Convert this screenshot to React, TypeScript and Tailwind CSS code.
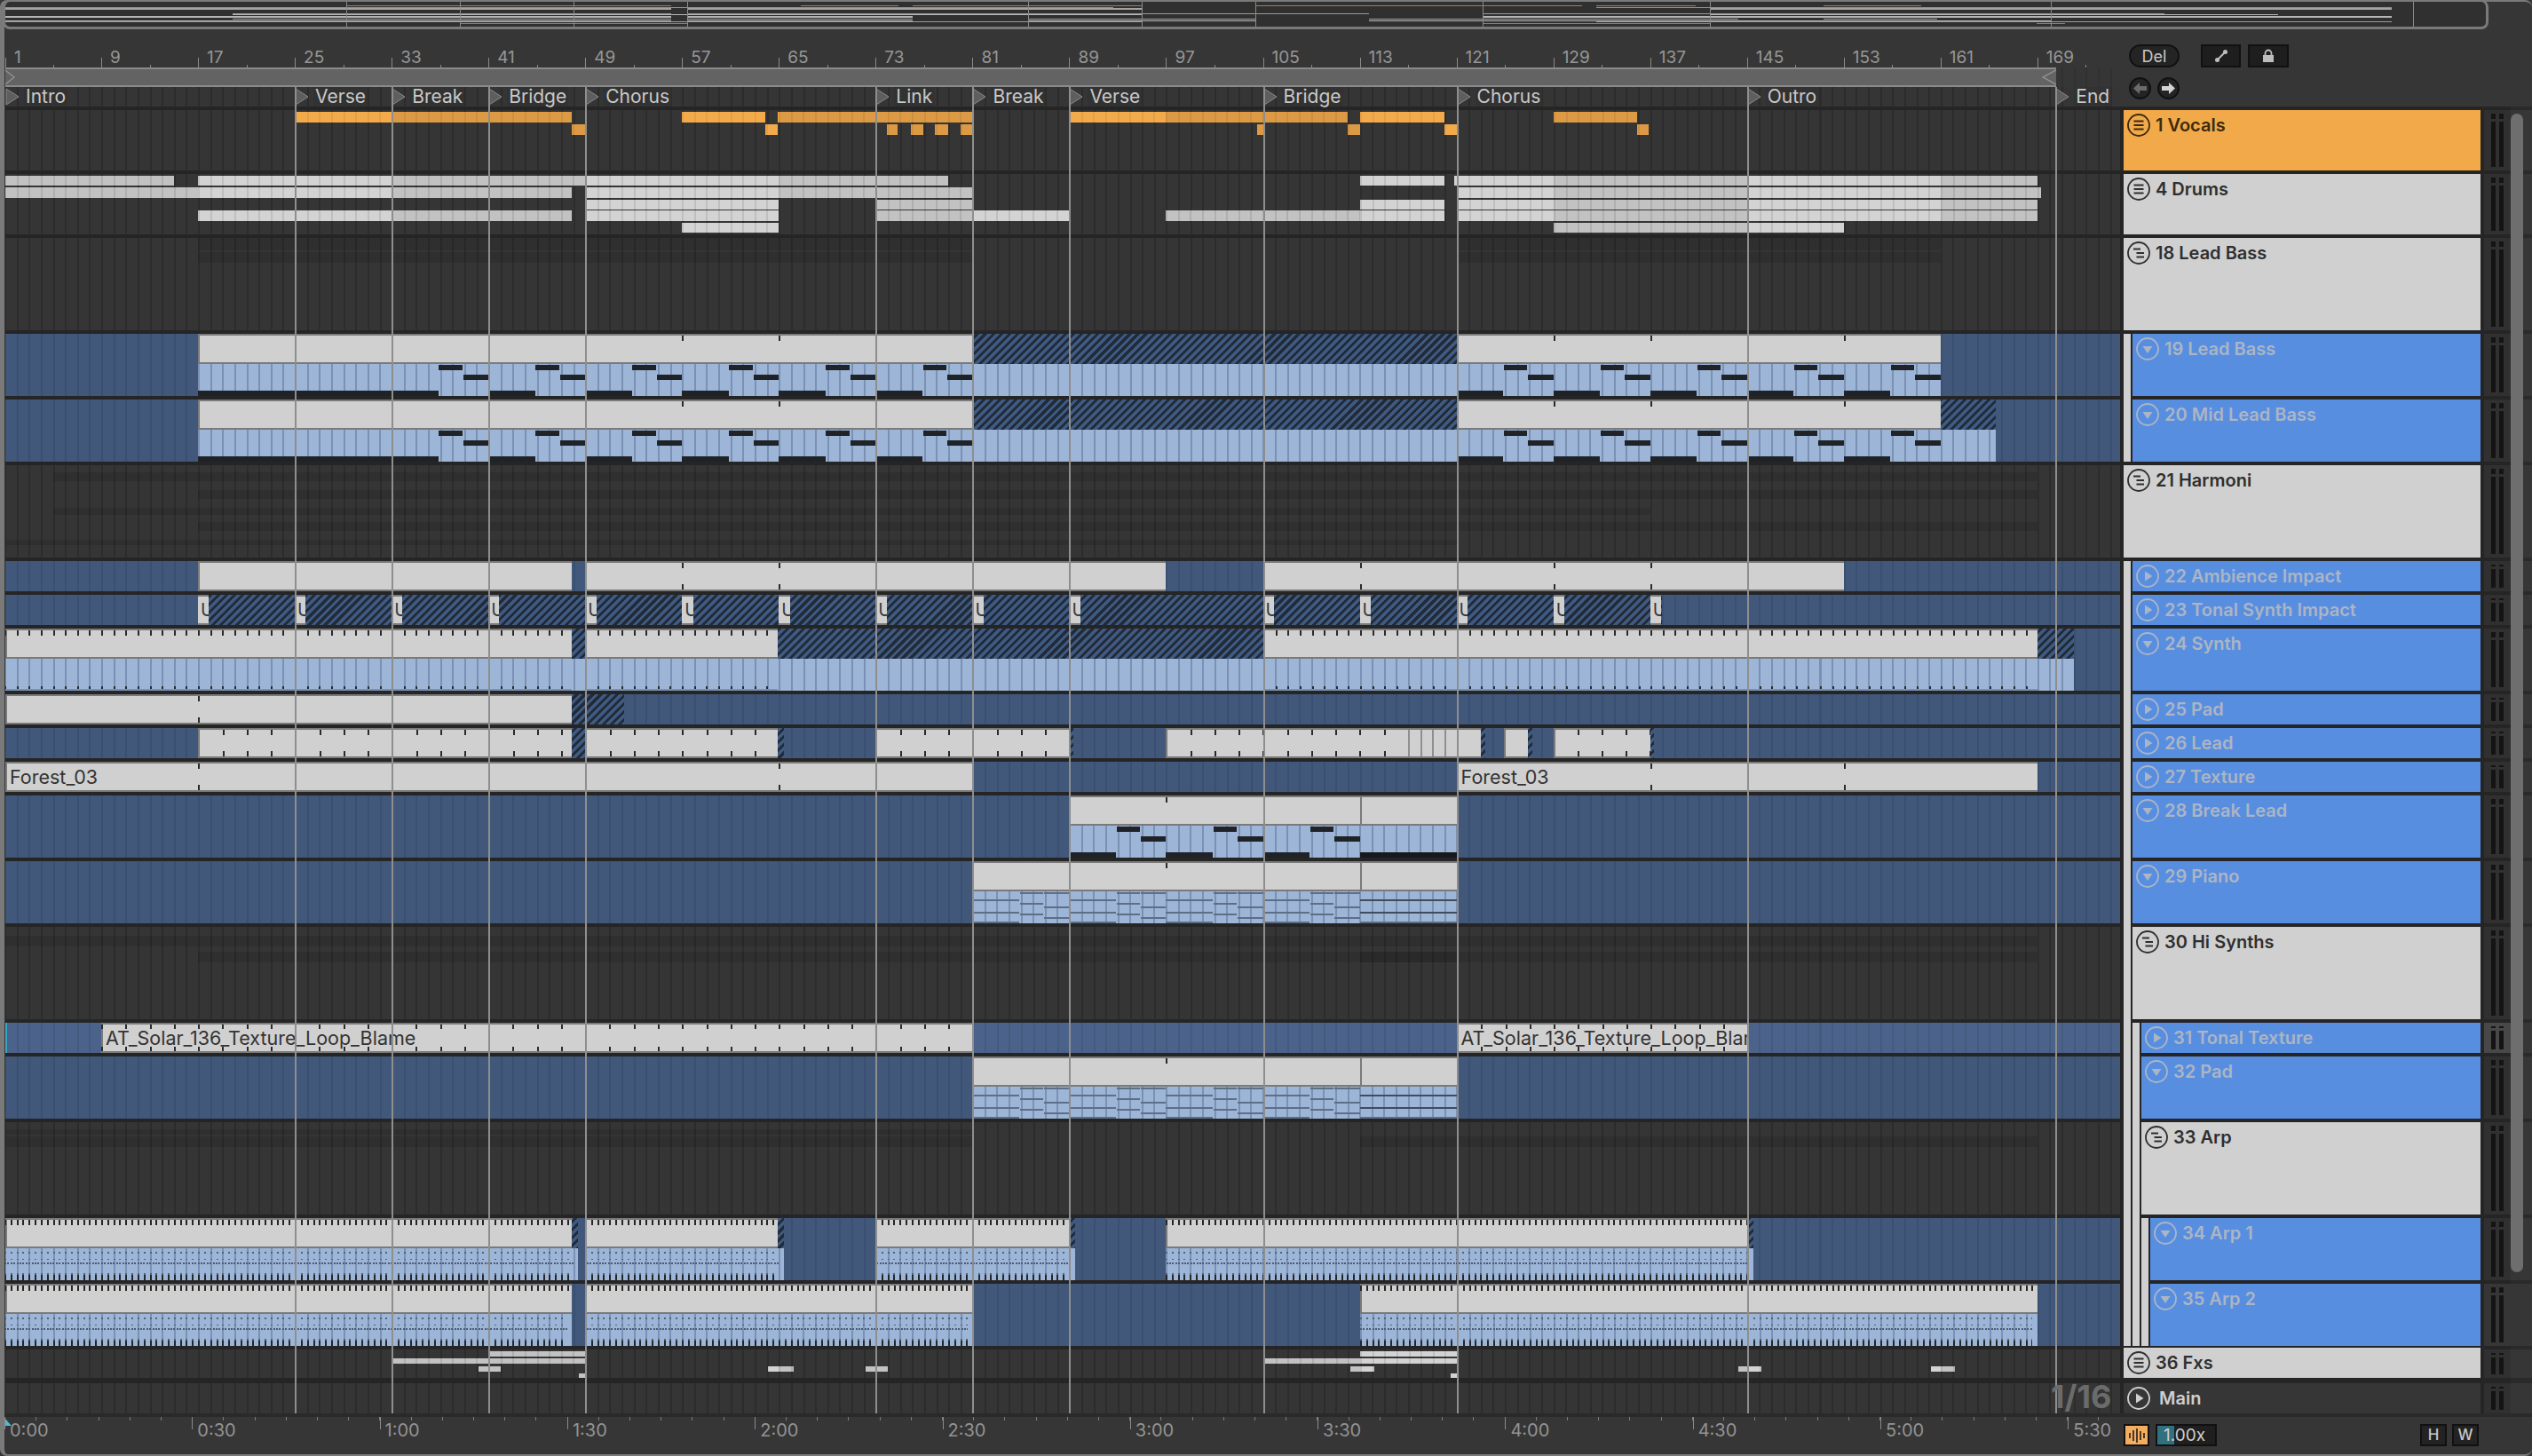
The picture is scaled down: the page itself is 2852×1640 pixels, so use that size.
import type { ReactNode } from "react"

// bar number -> x inside the arrangement lane (lane starts at page x=6)
const bx = (b: number) => Math.max(0, 5 + (b - 1) * 13.63 - 6)
const pageX = (b: number) => 5 + (b - 1) * 13.63
const mx = (b: number) => (b - 1) * 16

const gridBg = "bg-fixed bg-[position:5px_0] bg-[repeating-linear-gradient(90deg,#2c2c2c_0,#2c2c2c_2px,#353535_2px,#353535_13.63px)]"
const blueBg = "bg-fixed bg-[position:5px_0] bg-[repeating-linear-gradient(90deg,#3a5072_0,#3a5072_2px,#41587a_2px,#41587a_13.63px)]"
const blueLiteBg = "bg-fixed bg-[position:5px_0] bg-[repeating-linear-gradient(90deg,#445b80_0,#445b80_2px,#4b628a_2px,#4b628a_13.63px)]"
const bodyBg = "bg-fixed bg-[position:5px_0] bg-[repeating-linear-gradient(90deg,#7a91b3_0,#7a91b3_2px,#9db5d6_2px,#9db5d6_13.63px)]"
const hatchBg = "bg-fixed bg-[repeating-linear-gradient(135deg,#222b38_0,#222b38_3px,#3f5a82_3px,#3f5a82_6.4px)]"

const noteTones = {
  gray: [
    "bg-fixed bg-[position:5px_0] bg-[repeating-linear-gradient(90deg,#bfbfbf_0,#bfbfbf_2px,#d3d3d3_2px,#d3d3d3_13.63px)]",
    "bg-fixed bg-[position:5px_0] bg-[repeating-linear-gradient(90deg,#afafaf_0,#afafaf_2px,#c2c2c2_2px,#c2c2c2_13.63px)]",
  ],
  orange: [
    "bg-fixed bg-[position:5px_0] bg-[repeating-linear-gradient(90deg,#e59f45_0,#e59f45_2px,#f3aa4a_2px,#f3aa4a_13.63px)]",
    "bg-fixed bg-[position:5px_0] bg-[repeating-linear-gradient(90deg,#cf8f3f_0,#cf8f3f_2px,#dd9a44_2px,#dd9a44_13.63px)]",
  ],
}

function At({ from, to, top = 0, h, className, children }: { from: number; to: number; top?: number; h: number; className: string; children?: ReactNode }) {
  return (
    <div className={"absolute " + className} style={{ left: bx(from), width: bx(to) - bx(from), top, height: h }}>
      {children}
    </div>
  )
}

function Tick({ bar, top, h = 6 }: { bar: number; top: number; h?: number }) {
  return <div className="absolute w-[2px] bg-[#2a2a2a]" style={{ left: bx(bar), top, height: h }} />
}

// notes get darker on every other 16 bar stretch
function Notes({ spans, top, h, tone }: { spans: number[][]; top: number; h: number; tone: "gray" | "orange" }) {
  const pieces: { from: number; to: number; dark: boolean }[] = []
  spans.forEach(([from, to]) => {
    let a = from
    while (a < to) {
      const idx = Math.floor((a - 1) / 16)
      const b = Math.min(to, (idx + 1) * 16 + 1)
      pieces.push({ from: a, to: b, dark: idx % 2 === 0 })
      a = b
    }
  })
  return (
    <>
      {pieces.map((p, i) => (
        <At key={i} from={p.from} to={p.to} top={top} h={h} className={noteTones[tone][p.dark ? 1 : 0]} />
      ))}
    </>
  )
}

function Head({ from, to, h = 34, children }: { from: number; to: number; h?: number; children?: ReactNode }) {
  return (
    <At from={from} to={to} h={h} className="overflow-hidden border-y-2 border-l-2 border-[#7a7a7a] bg-[#d0d0d0]">
      {children}
    </At>
  )
}

function Body({ from, to }: { from: number; to: number }) {
  return <At from={from} to={to} top={34} h={36} className={bodyBg} />
}

function Hatch({ from, to, top = 0, h = 34 }: { from: number; to: number; top?: number; h?: number }) {
  return <At from={from} to={to} top={top} h={h} className={hatchBg} />
}

function ClipName({ text }: { text: string }) {
  return <span className="ml-[3px] block whitespace-nowrap text-[21.5px] leading-[30px] text-[#333333]">{text}</span>
}

// three lane riff, repeats every 8 bars
function Riff({ starts }: { starts: number[] }) {
  return (
    <>
      {starts.map((s) => (
        <div key={s}>
          <At from={s} to={s + 3.85} top={64} h={6} className="bg-[#1f2328]" />
          <At from={s + 3.9} to={s + 5.85} top={35} h={6} className="bg-[#1f2328]" />
          <At from={s + 5.9} to={s + 8} top={46} h={6} className="bg-[#1f2328]" />
        </div>
      ))}
    </>
  )
}

// thin pad lines of the chord clips
function PadLines({ from, starts, to }: { from: number; starts: number[]; to: number }) {
  return (
    <>
      {starts.map((s) => (
        <div key={s}>
          <At from={s} to={s + 3.85} top={43} h={2} className="bg-[#5d6e87]" />
          <At from={s} to={s + 3.85} top={57} h={2} className="bg-[#5d6e87]" />
          <At from={s} to={s + 3.85} top={68} h={2} className="bg-[#5d6e87]" />
          <At from={s + 3.9} to={s + 5.85} top={35} h={2} className="bg-[#5d6e87]" />
          <At from={s + 3.9} to={s + 5.85} top={47} h={2} className="bg-[#5d6e87]" />
          <At from={s + 3.9} to={s + 5.85} top={59} h={2} className="bg-[#5d6e87]" />
          <At from={s + 5.9} to={s + 8} top={35} h={2} className="bg-[#5d6e87]" />
          <At from={s + 5.9} to={s + 8} top={51} h={2} className="bg-[#5d6e87]" />
          <At from={s + 5.9} to={s + 8} top={63} h={2} className="bg-[#5d6e87]" />
        </div>
      ))}
      <At from={from} to={to} top={43} h={2} className="bg-[#3f4c5e]" />
      <At from={from} to={to} top={57} h={2} className="bg-[#3f4c5e]" />
      <At from={from} to={to} top={68} h={2} className="bg-[#5d6e87]" />
    </>
  )
}

function ArpClip({ heads, bodies, thin }: { heads: number[][]; bodies: number[][]; thin?: number[][] }) {
  const barTicks = "bg-fixed bg-[position:5px_0] bg-[repeating-linear-gradient(90deg,#262626_0,#262626_2px,transparent_2px,transparent_6.815px)]"
  const dots = "bg-fixed bg-[position:5px_0] bg-[repeating-linear-gradient(90deg,#4f617c_0,#4f617c_2px,transparent_2px,transparent_6.815px)]"
  const fineDots = "bg-fixed bg-[position:5px_0] bg-[repeating-linear-gradient(90deg,#4a5b75_0,#4a5b75_2px,transparent_2px,transparent_3.4px)]"
  return (
    <>
      {heads.map(([a, b]) => (
        <div key={a}>
          <Head from={a} to={b} />
          <At from={a} to={b} top={2} h={6} className={barTicks} />
        </div>
      ))}
      {(thin || []).map(([a, b]) => <Hatch key={a} from={a} to={b} />)}
      {bodies.map(([a, b]) => (
        <div key={a}>
          <Body from={a} to={b} />
          <At from={a} to={b - 0.4} top={38} h={2} className={dots} />
          <At from={a} to={b - 0.4} top={46} h={1} className={dots} />
          <At from={a} to={b - 0.4} top={50} h={2} className={fineDots} />
          <At from={a} to={b - 0.4} top={62} h={2} className={dots} />
          <At from={a} to={b - 0.4} top={64} h={6} className={barTicks} />
        </div>
      ))}
    </>
  )
}

function Band({ from, to, top, h }: { from: number; to: number; top: number; h: number }) {
  return <At from={from} to={to} top={top} h={h} className="bg-black/10" />
}

const melodyA = [33, 41, 49, 57, 65, 73, 121, 129, 137, 145, 153]
const everyBar = "bg-fixed bg-[position:5px_0] bg-[repeating-linear-gradient(90deg,#2a2a2a_0,#2a2a2a_2px,transparent_2px,transparent_13.63px)]"
const everyTwoBars = "bg-fixed bg-[position:5px_0] bg-[repeating-linear-gradient(90deg,#2a2a2a_0,#2a2a2a_2px,transparent_2px,transparent_27.26px)]"

const vocalsUp = [[25, 47.9], [57, 63.9], [64.9, 81], [89, 112], [113, 120], [129, 135.9]]
const vocalsLow = [[47.9, 49], [63.9, 64.9], [73.9, 74.8], [75.9, 76.9], [77.9, 79], [80, 81], [104.5, 105], [112, 113], [120, 121], [135.9, 136.9]]
const drums = [
  { top: 2, h: 11, spans: [[1, 15], [17, 79], [113, 120], [120.8, 169]] },
  { top: 15, h: 12, spans: [[1, 47.9], [49, 81], [121, 169.3]] },
  { top: 29, h: 11, spans: [[49, 65], [73, 81], [113, 120], [121, 169]] },
  { top: 41, h: 12, spans: [[17, 47.9], [49, 65], [73, 89], [97, 120], [121, 169]] },
  { top: 55, h: 11, spans: [[57, 65], [129, 153]] },
]
const fxLanes = [
  { top: 2, h: 6, spans: [[41, 49], [113, 121]] },
  { top: 10, h: 6, spans: [[33, 49], [105, 121]] },
  { top: 19, h: 6, spans: [[40.2, 42], [64.1, 66.2], [72.2, 74], [112.2, 114.2], [144.3, 146.2], [160.2, 162.2]] },
  { top: 27, h: 5, spans: [[48.5, 49], [120.5, 121]] },
]
const impactStarts = [17, 25, 33, 41, 49, 57, 65, 73, 81, 89, 105, 113, 121, 129, 137]

type Track = {
  name: string
  h: number
  depth: number
  shared: number
  tone: "orange" | "light" | "blue" | "main"
  icon: "closed" | "open" | "down" | "right"
  lane: "grid" | "blue" | "lite"
  sep?: number
  cell?: string
  content?: ReactNode
}

const tracks: Track[] = [
  {
    name: "1 Vocals", h: 68, depth: 0, shared: 0, tone: "orange", icon: "closed", lane: "grid",
    content: (
      <>
        <Notes spans={vocalsUp} top={2} h={12} tone="orange" />
        <Notes spans={vocalsLow} top={16} h={12} tone="orange" />
      </>
    ),
  },
  {
    name: "4 Drums", h: 68, depth: 0, shared: 0, tone: "light", icon: "closed", lane: "grid",
    content: <>{drums.map((d) => <Notes key={d.top} spans={d.spans} top={d.top} h={d.h} tone="gray" />)}</>,
  },
  {
    name: "18 Lead Bass", h: 104, depth: 0, shared: 0, tone: "light", icon: "open", lane: "grid",
    content: (
      <>
        <Band from={17} to={81} top={0} h={14} />
        <Band from={17} to={81} top={16} h={12} />
        <Band from={121} to={161} top={0} h={14} />
        <Band from={121} to={161} top={16} h={12} />
      </>
    ),
  },
  {
    name: "19 Lead Bass", h: 70, depth: 1, shared: 0, tone: "blue", icon: "down", lane: "blue",
    content: (
      <>
        <Head from={17} to={81} />
        <Hatch from={81} to={121} />
        <Head from={121} to={161} />
        {[57, 65, 129, 137, 153].map((b) => <Tick key={b} bar={b} top={2} />)}
        <Body from={17} to={161} />
        <At from={17} to={33} top={64} h={6} className="bg-[#1f2328]" />
        <Riff starts={melodyA} />
      </>
    ),
  },
  {
    name: "20 Mid Lead Bass", h: 70, depth: 1, shared: 1, tone: "blue", icon: "down", lane: "blue",
    content: (
      <>
        <Head from={17} to={81} />
        <Hatch from={81} to={121} />
        <Head from={121} to={161} />
        <Hatch from={161} to={165.6} />
        {[57, 65, 129, 137, 153].map((b) => <Tick key={b} bar={b} top={2} />)}
        <Body from={17} to={165.6} />
        <At from={17} to={33} top={64} h={6} className="bg-[#1f2328]" />
        <Riff starts={melodyA} />
      </>
    ),
  },
  {
    name: "21 Harmoni", h: 104, depth: 0, shared: 0, tone: "light", icon: "open", lane: "grid",
    content: (
      <>
        <Band from={5} to={169} top={8} h={10} />
        <Band from={17} to={169} top={28} h={10} />
        <Band from={5} to={137} top={48} h={8} />
        <Band from={17} to={169} top={64} h={10} />
        <Band from={1} to={121} top={84} h={6} />
      </>
    ),
  },
  {
    name: "22 Ambience Impact", h: 34, depth: 1, shared: 0, tone: "blue", icon: "right", lane: "blue",
    content: (
      <>
        {[[17, 47.9], [49, 97], [105, 153]].map(([a, b]) => <Head key={a} from={a} to={b} />)}
        {[57, 65, 113, 129, 137].map((b) => (
          <div key={b}>
            <Tick bar={b} top={2} />
            <Tick bar={b} top={26} />
          </div>
        ))}
      </>
    ),
  },
  {
    name: "23 Tonal Synth Impact", h: 34, depth: 1, shared: 1, tone: "blue", icon: "right", lane: "blue",
    content: (
      <>
        <Hatch from={17} to={138} />
        {impactStarts.map((b) => (
          <At key={b} from={b} to={b + 0.9} h={34} className="overflow-hidden border-y-2 border-[#7a7a7a] bg-[#d0d0d0]">
            <span className="ml-[3px] block text-[20px] leading-[30px] text-[#3a3a3a]">U</span>
          </At>
        ))}
      </>
    ),
  },
  {
    name: "24 Synth", h: 70, depth: 1, shared: 1, tone: "blue", icon: "down", lane: "blue",
    content: (
      <>
        {[[1, 47.9], [49, 64.9], [105, 169]].map(([a, b]) => (
          <div key={a}>
            <Head from={a} to={b} />
            <At from={a} to={b} top={2} h={6} className={everyBar} />
          </div>
        ))}
        <Hatch from={47.9} to={49} />
        <Hatch from={64.9} to={105} />
        <Hatch from={169} to={172} />
        <Body from={1} to={172} />
        {[[1, 47.9], [49, 64.9], [105, 169]].map(([a, b]) => (
          <div key={a}>
            <At from={a} to={b} top={65} h={4} className={everyBar} />
            <At from={a} to={b} top={68} h={2} className="bg-[#7a91b3]" />
          </div>
        ))}
      </>
    ),
  },
  {
    name: "25 Pad", h: 34, depth: 1, shared: 1, tone: "blue", icon: "right", lane: "blue",
    content: (
      <>
        <Head from={1} to={47.9} />
        <Hatch from={47.9} to={52.2} />
        <Tick bar={17} top={2} />
        <Tick bar={17} top={26} />
      </>
    ),
  },
  {
    name: "26 Lead", h: 34, depth: 1, shared: 1, tone: "blue", icon: "right", lane: "blue",
    content: (
      <>
        {[[17, 47.9], [49, 64.9], [73, 89], [97, 123], [124.9, 126.9], [129, 137]].map(([a, b]) => <Head key={a} from={a} to={b} />)}
        {[[47.9, 49], [64.9, 65.4], [89, 89.3], [123, 123.4], [126.9, 127.3], [137, 137.3]].map(([a, b]) => <Hatch key={a} from={a} to={b} />)}
        {[[17, 47.9], [49, 64.9], [73, 89], [97, 116], [129, 137]].map(([a, b]) => (
          <div key={a}>
            <At from={a + 1} to={b} top={2} h={6} className={everyTwoBars} />
            <At from={a + 1} to={b} top={26} h={6} className={everyTwoBars} />
          </div>
        ))}
        {[117, 118, 119, 120].map((b) => <At key={b} from={b} to={b + 0.15} top={2} h={30} className="bg-[#8f8f8f]" />)}
      </>
    ),
  },
  {
    name: "27 Texture", h: 34, depth: 1, shared: 1, tone: "blue", icon: "right", lane: "blue",
    content: (
      <>
        <Head from={1} to={81}><ClipName text="Forest_03" /></Head>
        <Head from={121} to={169}><ClipName text="Forest_03" /></Head>
        {[17, 65, 137, 153].map((b) => (
          <div key={b}>
            <Tick bar={b} top={2} />
            <Tick bar={b} top={26} />
          </div>
        ))}
      </>
    ),
  },
  {
    name: "28 Break Lead", h: 70, depth: 1, shared: 1, tone: "blue", icon: "down", lane: "blue",
    content: (
      <>
        <Head from={89} to={121} />
        <Tick bar={97} top={2} />
        <At from={113} to={113.15} top={2} h={30} className="bg-[#7a7a7a]" />
        <Body from={89} to={121} />
        <Riff starts={[89, 97, 105]} />
        <At from={113} to={121} top={64} h={6} className="bg-[#17191c]" />
      </>
    ),
  },
  {
    name: "29 Piano", h: 70, depth: 1, shared: 1, tone: "blue", icon: "down", lane: "blue",
    content: (
      <>
        <Head from={81} to={121} />
        <Tick bar={97} top={2} />
        <At from={113} to={113.15} top={2} h={30} className="bg-[#7a7a7a]" />
        <Body from={81} to={121} />
        <PadLines starts={[81, 89, 97, 105]} from={113} to={121} />
      </>
    ),
  },
  {
    name: "30 Hi Synths", h: 104, depth: 1, shared: 1, tone: "light", icon: "open", lane: "grid",
    content: (
      <>
        <Band from={1} to={169} top={10} h={12} />
        <Band from={17} to={121} top={28} h={12} />
        <Band from={113} to={169} top={28} h={12} />
      </>
    ),
  },
  {
    name: "31 Tonal Texture", h: 34, depth: 2, shared: 1, tone: "blue", icon: "right", lane: "lite",
    content: (
      <>
        <div className="absolute left-0 top-0 h-[34px] w-[2px] bg-[#35a9c4]" />
        <Head from={9} to={81}><ClipName text="AT_Solar_136_Texture_Loop_Blame" /></Head>
        <Head from={121} to={145}><ClipName text="AT_Solar_136_Texture_Loop_Blame" /></Head>
        {[[9, 81], [121, 145]].map(([a, b]) => (
          <div key={a}>
            <At from={a} to={b} top={2} h={5} className={everyTwoBars} />
            <At from={a} to={b} top={27} h={5} className={everyTwoBars} />
          </div>
        ))}
      </>
    ),
  },
  {
    name: "32 Pad", h: 70, depth: 2, shared: 2, tone: "blue", icon: "down", lane: "blue",
    content: (
      <>
        <Head from={81} to={121} />
        <Tick bar={97} top={2} />
        <At from={113} to={113.15} top={2} h={30} className="bg-[#7a7a7a]" />
        <Body from={81} to={121} />
        <PadLines starts={[81, 89, 97, 105]} from={113} to={121} />
      </>
    ),
  },
  {
    name: "33 Arp", h: 104, depth: 2, shared: 2, tone: "light", icon: "open", lane: "grid",
    content: (
      <>
        <Band from={1} to={81} top={8} h={6} />
        <Band from={1} to={81} top={16} h={12} />
        <Band from={113} to={169} top={16} h={12} />
      </>
    ),
  },
  {
    name: "34 Arp 1", h: 70, depth: 3, shared: 2, tone: "blue", icon: "down", lane: "blue",
    content: (
      <ArpClip
        heads={[[1, 47.9], [49, 64.9], [73, 89], [97, 145]]}
        thin={[[47.9, 48.4], [64.9, 65.4], [89, 89.5], [145, 145.5]]}
        bodies={[[1, 48.4], [49, 65.4], [73, 89.5], [97, 145.5]]}
      />
    ),
  },
  {
    name: "35 Arp 2", h: 70, depth: 3, shared: 3, tone: "blue", icon: "down", lane: "blue", cell: "bg-[#363636]",
    content: (
      <ArpClip heads={[[1, 47.9], [49, 81], [113, 169]]} bodies={[[1, 47.9], [49, 81], [113, 169]]} />
    ),
  },
  {
    name: "36 Fxs", h: 32, depth: 0, shared: 0, tone: "light", icon: "closed", lane: "grid",
    content: <>{fxLanes.map((l) => <Notes key={l.top} spans={l.spans} top={l.top} h={l.h} tone="gray" />)}</>,
  },
  { name: "Main", h: 34, depth: 0, shared: 0, tone: "main", icon: "right", lane: "grid", sep: 6 },
]

const laneClass = { grid: gridBg, blue: blueBg, lite: blueLiteBg }
const toneClass = {
  orange: "bg-[#f2a949] text-[#3d2a0e]",
  light: "bg-[#d0d0d0] text-[#2f2f2f]",
  blue: "bg-[#588ee0] text-[#acb5c4]",
  main: "bg-[#363636] text-[#cfcfcf]",
}

function TrackIcon({ icon }: { icon: Track["icon"] }) {
  return (
    <svg width="26" height="26" viewBox="0 0 26 26" className="shrink-0" fill="none" stroke="currentColor">
      <circle cx="13" cy="13" r="12" strokeWidth="1.8" />
      {icon === "closed" && <path d="M7.5 8.5H18.5M7.5 13H18.5M7.5 17.5H18.5" strokeWidth="2" />}
      {icon === "open" && <path d="M7 8.5H15M10.5 13H19M10.5 17.5H19" strokeWidth="2" />}
      {icon === "down" && <path d="M7.5 10H18.5L13 18Z" fill="currentColor" stroke="none" />}
      {icon === "right" && <path d="M10 7.5V18.5L18.5 13Z" fill="currentColor" stroke="none" />}
    </svg>
  )
}

function Indent({ count }: { count: number }) {
  return (
    <>
      {Array.from({ length: count }).map((_, i) => (
        <div key={i} className="flex shrink-0">
          <div className="w-[8px] bg-[#d0d0d0]" />
          <div className="w-[2px] bg-[#252525]" />
        </div>
      ))}
    </>
  )
}

function TrackRow({ t }: { t: Track }) {
  const sep = t.sep ?? 4
  const short = t.h <= 34
  return (
    <div className="flex" style={{ height: t.h + sep }}>
      {/* lane */}
      <div className="ml-[6px] flex w-[2382px] flex-col">
        <div className="bg-[#252525]" style={{ height: sep }} />
        <div className={"relative flex-1 overflow-hidden " + laneClass[t.lane]}>{t.content}</div>
      </div>
      <div className="w-[4px] bg-[#252525]" />
      {/* header */}
      <div className="flex w-[402px]">
        <Indent count={t.shared} />
        <div className="flex flex-1 flex-col">
          <div className="bg-[#252525]" style={{ height: sep }} />
          <div className="flex flex-1">
            <Indent count={t.depth - t.shared} />
            <div className={"flex flex-1 items-start " + toneClass[t.tone]}>
              <div className="flex h-[34px] items-center gap-[6px] pl-[4px]">
                <TrackIcon icon={t.icon} />
                <span className={"whitespace-nowrap text-[20px] font-semibold " + (t.tone === "main" ? "pl-[4px]" : "")}>{t.name}</span>
              </div>
            </div>
          </div>
        </div>
      </div>
      <div className="w-[4px] bg-[#252525]" />
      {/* mixer cell */}
      <div className="flex w-[30px] flex-col">
        <div className="bg-[#252525]" style={{ height: sep }} />
        <div className={"flex flex-1 gap-[4px] py-[4px] pl-[8px] " + (t.name === "31 Tonal Texture" ? "bg-[#484848]" : t.cell ?? "bg-[#303030]")}>
          {[0, 1].map((i) => (
            <div key={i} className="flex w-[5px] flex-col gap-[3px]">
              <div className={"bg-[#141414] " + (short ? "h-[2px]" : "h-[6px]")} />
              <div className="flex-1 bg-[#141414]" />
            </div>
          ))}
        </div>
      </div>
      <div className="flex w-[24px] flex-col">
        <div className="bg-[#2a2a2a]" style={{ height: sep }} />
      </div>
    </div>
  )
}

const miniRows: { y: number; h: number; cls: string; spans: number[][] }[] = [
  { y: 6, h: 1, cls: "bg-[#b07a3a]", spans: vocalsUp },
  { y: 8, h: 1, cls: "bg-[#8f8f8f]", spans: [[1, 79], [113, 169]] },
  { y: 9, h: 2, cls: "bg-[#a3a3a3]", spans: [[1, 47.9], [49, 81], [121, 169]] },
  { y: 15, h: 1, cls: "bg-[#9a9a9a]", spans: [[17, 47.9], [49, 97], [105, 153]] },
  { y: 16, h: 1, cls: "bg-[#b5b5b5]", spans: [[17, 81], [121, 161]] },
  { y: 18, h: 2, cls: "bg-[#b5b5b5]", spans: [[1, 47.9], [49, 64.9], [105, 169]] },
  { y: 21, h: 1, cls: "bg-[#a5a5a5]", spans: [[17, 47.9], [49, 64.9], [73, 89], [97, 123], [129, 137]] },
  { y: 23, h: 1, cls: "bg-[#b5b5b5]", spans: [[1, 47.9], [49, 64.9], [73, 89], [97, 145]] },
  { y: 24, h: 1, cls: "bg-[#9a9a9a]", spans: [[1, 81], [113, 169]] },
  { y: 26, h: 1, cls: "bg-[#7f7f7f]", spans: [[33, 49], [105, 121], [144, 146]] },
]

const locators = [
  { name: "Intro", bar: 1 },
  { name: "Verse", bar: 25 },
  { name: "Break", bar: 33 },
  { name: "Bridge", bar: 41 },
  { name: "Chorus", bar: 49 },
  { name: "Link", bar: 73 },
  { name: "Break", bar: 81 },
  { name: "Verse", bar: 89 },
  { name: "Bridge", bar: 105 },
  { name: "Chorus", bar: 121 },
  { name: "Outro", bar: 145 },
  { name: "End", bar: 170.5 },
]
const rulerBars = Array.from({ length: 22 }).map((_, i) => 1 + i * 8)
const times = ["0:00", "0:30", "1:00", "1:30", "2:00", "2:30", "3:00", "3:30", "4:00", "4:30", "5:00", "5:30"]

function Overview() {
  const marks = locators.slice(1)
  return (
    <div className="relative ml-[3px] h-[33px] w-[2800px] overflow-hidden rounded-[8px] border-x-[3px] border-b-[3px] border-t-2 border-[#7a7a7a] bg-[#303030]">
      {miniRows.map((r, i) => (
        <div key={i}>
          {r.spans.map(([a, b]) => (
            <div key={a} className={"absolute " + r.cls} style={{ left: mx(a), width: mx(b) - mx(a), top: r.y - 2, height: r.h }} />
          ))}
        </div>
      ))}
      {marks.map((l) => (
        <div key={l.bar} className="absolute top-0 h-full w-[1px] bg-[#8a8a8a]" style={{ left: mx(l.bar) }} />
      ))}
    </div>
  )
}

function TopBar() {
  return (
    <div className="flex h-[87px]">
      {/* ruler, loop brace, locators */}
      <div className="ml-[6px] flex w-[2382px] flex-col">
        <div className="relative h-[43px]">
          {rulerBars.map((b) => (
            <div key={b}>
              <div className="absolute bottom-0 h-[11px] w-[1px] bg-[#8a8a8a]" style={{ left: bx(b) }} />
              <div className="absolute bottom-0 h-[3px] w-[1px] bg-[#8a8a8a]" style={{ left: bx(b + 4) }} />
              <span className="absolute top-[20px] text-[19px] leading-[24px] text-[#969696]" style={{ left: bx(b) + 10 }}>{b}</span>
            </div>
          ))}
        </div>
        <div className="flex h-[22px]">
          <div className="flex w-[2310px] flex-col">
            <div className="h-[2px] bg-[#8a8a8a]" />
            <div className="relative flex-1 bg-[#636363]">
              <svg width="12" height="18" viewBox="0 0 12 18" className="absolute left-0 top-0" fill="none">
                <path d="M0 1L10 9L0 17" stroke="#8f8f8f" strokeWidth="1.5" />
              </svg>
              <svg width="16" height="18" viewBox="0 0 16 18" className="absolute right-0 top-0" fill="none">
                <path d="M16 1L1 9L16 17" stroke="#8f8f8f" strokeWidth="1.5" />
              </svg>
            </div>
            <div className="h-[2px] bg-[#8a8a8a]" />
          </div>
          <div className={"flex-1 opacity-50 " + gridBg} />
        </div>
        <div className={"relative h-[22px] " + gridBg}>
          {locators.map((l) => (
            <div key={l.name + l.bar} className="absolute top-0 flex h-[22px] items-center" style={{ left: bx(l.bar) }}>
              <svg width="16" height="22" viewBox="0 0 16 22" className="shrink-0">
                <path d="M1 2L15 11L1 20Z" fill="#5e5e5e" stroke="#8a8a8a" strokeWidth="1" />
              </svg>
              <span className="ml-[5px] bg-[#323232] px-[2px] text-[21px] leading-[22px] text-[#c9c9c9]">{l.name}</span>
            </div>
          ))}
        </div>
      </div>
      {/* edit buttons */}
      <div className="flex flex-col pl-[10px] pt-[17px]">
        <div className="flex h-[26px]">
          <div className="flex w-[57px] items-center justify-center rounded-full border-2 border-[#111111] bg-[#242424] text-[18px] text-[#c8c8c8]">Del</div>
          <div className="ml-[24px] flex w-[45px] items-center justify-center border-2 border-[#111111] bg-[#1e1e1e]">
            <svg width="16" height="16" viewBox="0 0 16 16" fill="none">
              <path d="M3.5 12.5L12 4" stroke="#bdbdbd" strokeWidth="2" />
              <circle cx="3.5" cy="12.5" r="2.5" fill="#bdbdbd" />
              <circle cx="12.5" cy="3.5" r="2.5" fill="#bdbdbd" />
            </svg>
          </div>
          <div className="ml-[8px] flex w-[46px] items-center justify-center border-2 border-[#111111] bg-[#1e1e1e]">
            <svg width="16" height="16" viewBox="0 0 16 16" fill="none">
              <path d="M4.5 7V5a3.5 3.5 0 0 1 7 0V7" stroke="#bdbdbd" strokeWidth="1.8" />
              <rect x="2" y="7" width="12" height="8" fill="#bdbdbd" />
            </svg>
          </div>
        </div>
        <div className="mt-[11px] flex gap-[7px]">
          <div className="flex h-[25px] w-[25px] items-center justify-center rounded-full border-2 border-[#111111] bg-[#242424]">
            <svg width="15" height="13" viewBox="0 0 15 13"><path d="M0 6.5L7 0V4H15V9H7V13Z" fill="#6b6b6b" /></svg>
          </div>
          <div className="flex h-[25px] w-[25px] items-center justify-center rounded-full border-2 border-[#111111] bg-[#242424]">
            <svg width="15" height="13" viewBox="0 0 15 13"><path d="M15 6.5L8 0V4H0V9H8V13Z" fill="#d4d4d4" /></svg>
          </div>
        </div>
      </div>
    </div>
  )
}

function BottomBar() {
  return (
    <div className="flex h-[44px]">
      <div className="relative ml-[6px] w-[2386px]">
        <div className="h-[4px] w-full bg-fixed bg-[position:5px_0] bg-[repeating-linear-gradient(90deg,#7d7d7d_0,#7d7d7d_1px,transparent_1px,transparent_35.2px)]" />
        {times.map((t, i) => (
          <div key={t} className="absolute top-[0px]" style={{ left: i * 211.3 - 1 }}>
            <div className="h-[14px] w-[1px] bg-[#8a8a8a]" />
            <span className="absolute left-[6px] top-[3px] text-[20px] leading-[24px] text-[#939393]">{t}</span>
          </div>
        ))}
        <div className="absolute left-0 top-[2px] h-0 w-0 border-b-[8px] border-r-[7px] border-b-[#52b7cf] border-r-transparent" />
      </div>
      <div className="flex flex-1 pt-[8px]">
        <div className="flex h-[25px] w-[29px] items-center justify-center border-2 border-[#111111] bg-[#f4ad5f]">
          <svg width="20" height="16" viewBox="0 0 20 16" stroke="#1f1f1f" strokeWidth="1.6">
            <path d="M2 5V11M6 2V14M10 0V16M14 3V13M18 5V11" />
          </svg>
        </div>
        <div className="relative ml-[7px] h-[25px] w-[69px] border-2 border-[#111111] bg-[#1f1f1f]">
          <div className="absolute left-0 top-0 h-full w-[19px] bg-[#31707f]" />
          <span className="absolute left-[7px] top-0 text-[19px] leading-[21px] text-[#cfcfcf]">1.00x</span>
        </div>
        <div className="ml-[229px] flex h-[25px] w-[30px] items-center justify-center border-2 border-[#111111] bg-[#232323] text-[17px] font-medium text-[#c8c8c8]">H</div>
        <div className="ml-[6px] flex h-[25px] w-[30px] items-center justify-center border-2 border-[#111111] bg-[#232323] text-[17px] font-medium text-[#c8c8c8]">W</div>
      </div>
    </div>
  )
}

export default function App() {
  const lines = locators.slice(1)
  return (
    <div className="relative h-[1640px] w-[2852px] overflow-hidden bg-[#363636] font-[family-name:Inter,sans-serif]">
      <Overview />
      <TopBar />
      {tracks.map((t) => <TrackRow key={t.name} t={t} />)}
      <div className="h-[4px] bg-[#2a2a2a]" />
      <BottomBar />

      {/* locator lines run over the lanes */}
      {lines.map((l) => (
        <div key={l.bar} className="absolute top-[98px] h-[1494px] w-[2px] bg-[#8e8e8e]" style={{ left: pageX(l.bar) }} />
      ))}
      <span className="absolute left-[2310px] top-[1552px] text-[36px] font-bold leading-[42px] text-[#6b6b6b]">1/16</span>
      {/* scrollbar */}
      <div className="absolute left-[2828px] top-[128px] h-[1305px] w-[14px] rounded-full bg-[#6e6e6e]" />
      {/* window frame */}
      <div className="pointer-events-none absolute inset-0 rounded-[8px] border-b-2 border-l-[5px] border-r-0 border-t-2 border-[#7a7a7a]" />
    </div>
  )
}
